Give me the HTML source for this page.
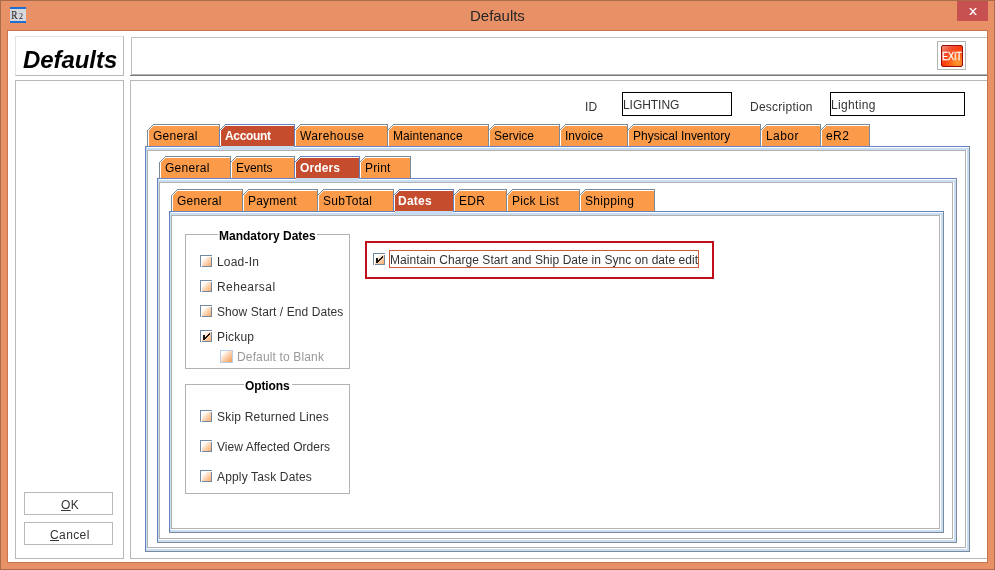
<!DOCTYPE html>
<html lang="en"><head><meta charset="utf-8"><title>Defaults</title>
<style>
html,body{margin:0;padding:0;}
body{width:995px;height:570px;overflow:hidden;background:#e99166;position:relative;font-family:"Liberation Sans",sans-serif;font-size:12px;color:#333333;}
div{position:absolute;box-sizing:border-box;}
svg{position:absolute;left:0;top:0;}
.t{white-space:nowrap;will-change:transform;}
.b{font-weight:bold;color:#000;}
.tab{color:#000;}
.sel{color:#fff;font-weight:bold;}
.dis{color:#999;}
.ti{color:#262626;}
.big{font-weight:bold;font-style:italic;color:#000;}
.ex{color:#fff;}
u{text-decoration:underline;}
.cb{width:12px;height:12px;background:linear-gradient(#fff,#fff) 1px 1px/11px 1px no-repeat,linear-gradient(#fff,#fff) 1px 1px/1px 11px no-repeat,linear-gradient(135deg,#fff 18%,#fdd9bb 50%,#fbab6a 100%) 2px 2px/9px 9px no-repeat,linear-gradient(#fff,#fff) 1px 1px/10px 10px no-repeat,#7088a0;}
.cb.ck{background:linear-gradient(#141414,#141414) 3px 5px/2px 5px no-repeat,linear-gradient(#141414,#141414) 5px 7px/1px 2px no-repeat,linear-gradient(#141414,#141414) 6px 6px/1px 2px no-repeat,linear-gradient(#141414,#141414) 7px 5px/1px 2px no-repeat,linear-gradient(#141414,#141414) 8px 4px/1px 2px no-repeat,linear-gradient(#141414,#141414) 9px 3px/1px 2px no-repeat,linear-gradient(#fff,#fff) 1px 1px/11px 1px no-repeat,linear-gradient(#fff,#fff) 1px 1px/1px 11px no-repeat,linear-gradient(135deg,#fff 18%,#fdd9bb 50%,#fbab6a 100%) 2px 2px/9px 9px no-repeat,linear-gradient(#fff,#fff) 1px 1px/10px 10px no-repeat,#7088a0;}
.cbd{width:13px;height:13px;background:linear-gradient(135deg,#fff 18%,#fbd3b2 50%,#f39a52 100%) 1px 1px/11px 11px no-repeat,#b8cfe5;}
</style></head>
<body>
<div style="left:0px;top:0px;width:995px;height:570px;border:1px solid #aa6b4c;"></div>
<div style="left:7px;top:30px;width:981px;height:533px;background:#fff;border:1px solid #c8744f;"></div>
<div style="left:957px;top:1px;width:31px;height:20px;background:#c75050;"></div>
<svg width="995" height="570" viewBox="0 0 995 570"><path d="M969.1 8h1.8l6 7h-1.8zM975.1 8h1.8l-6 7h-1.8z" fill="#fff"/></svg>
<div style="left:10px;top:7px;width:16px;height:16px;background:#d7d7de;border-top:2px solid #1f6fd0;border-bottom:2px solid #1f6fd0;overflow:hidden;"><div class="t" style="left:0.8px;top:-1px;font-family:'Liberation Serif',serif;font-size:12px;line-height:14px;color:#1a1a1a;transform:scaleX(.82);transform-origin:0 0;">R</div><div class="t" style="left:8.8px;top:2.6px;font-family:'Liberation Serif',serif;font-size:8px;line-height:10px;color:#1a1a1a;">2</div></div>
<div style="left:15px;top:36px;width:109px;height:40px;border:1px solid #b8b8b8;border-top-color:#e2e2e2;border-left-color:#e2e2e2;"></div>
<div style="left:15px;top:80px;width:109px;height:479px;border:1px solid #b8b8b8;"></div>
<div style="left:131px;top:37px;width:856px;height:38px;border-top:1px solid #c0c0c0;border-left:1px solid #c0c0c0;"></div>
<div style="left:131px;top:74px;width:856px;height:1px;background:#b4b4b4;"></div>
<div style="left:130px;top:75px;width:857px;height:1px;background:#787878;"></div>
<div style="left:130px;top:80px;width:857px;height:479px;border-top:1px solid #b8b8b8;border-left:1px solid #b8b8b8;border-bottom:1px solid #b8b8b8;"></div>
<div style="left:937px;top:41px;width:29px;height:29px;border:1px solid #b4b4b4;background:#fff;"></div>
<div style="left:941px;top:45px;width:22px;height:22px;border:1px solid #9c0a0a;border-radius:2px;background:radial-gradient(ellipse at 78% 82%,#ff9c34 0%,rgba(255,130,40,.6) 30%,rgba(255,90,20,0) 60%),linear-gradient(135deg,#f0937f 0%,#f0553a 24%,#ff3c0c 50%,#ff4a12 100%);"></div>
<div style="left:24px;top:492px;width:89px;height:23px;border:1px solid #b8b8b8;background:#fff;"></div>
<div style="left:24px;top:522px;width:89px;height:23px;border:1px solid #b8b8b8;background:#fff;"></div>
<div style="left:622px;top:92px;width:110px;height:24px;border:1px solid #000;background:#fff;"></div>
<div style="left:830px;top:92px;width:135px;height:24px;border:1px solid #000;background:#fff;"></div>
<svg width="995" height="570" viewBox="0 0 995 570" shape-rendering="crispEdges"><rect x="145" y="146" width="825" height="406" fill="#c8ddf2"/><rect x="147" y="150" width="820" height="399" fill="#fff"/><rect x="146" y="147" width="823" height="1" fill="#fff"/><rect x="146" y="147" width="1" height="404" fill="#c8ddf2"/><rect x="145" y="146" width="825" height="1" fill="#6382bf"/><rect x="145" y="146" width="1" height="406" fill="#6382bf"/><rect x="969" y="146" width="1" height="406" fill="#7a8a99"/><rect x="145" y="551" width="825" height="1" fill="#7a8a99"/><rect x="147.5" y="150.5" width="818" height="397" fill="none" stroke="#b2b2b2" stroke-width="1"/><polygon points="147,146 147,130 153,124 220,124 220,146" fill="#fb9b4a"/><polyline points="148.5,146 148.5,130.5 153.5,125.5 219,125.5" fill="none" stroke="#fff" stroke-width="1"/><polyline points="147.5,146 147.5,130.5 153.5,124.5 219.5,124.5" fill="none" stroke="#7a8a99" stroke-width="1"/><rect x="219" y="124" width="1" height="22" fill="#7a8a99"/><polygon points="294,146 294,130 300,124 388,124 388,146" fill="#fb9b4a"/><polyline points="295.5,146 295.5,130.5 300.5,125.5 387,125.5" fill="none" stroke="#fff" stroke-width="1"/><polyline points="294.5,146 294.5,130.5 300.5,124.5 387.5,124.5" fill="none" stroke="#7a8a99" stroke-width="1"/><rect x="387" y="124" width="1" height="7" fill="#7a8a99"/><polygon points="387,146 387,130 393,124 489,124 489,146" fill="#fb9b4a"/><polyline points="388.5,146 388.5,130.5 393.5,125.5 488,125.5" fill="none" stroke="#fff" stroke-width="1"/><polyline points="387.5,146 387.5,130.5 393.5,124.5 488.5,124.5" fill="none" stroke="#7a8a99" stroke-width="1"/><rect x="488" y="124" width="1" height="7" fill="#7a8a99"/><polygon points="488,146 488,130 494,124 560,124 560,146" fill="#fb9b4a"/><polyline points="489.5,146 489.5,130.5 494.5,125.5 559,125.5" fill="none" stroke="#fff" stroke-width="1"/><polyline points="488.5,146 488.5,130.5 494.5,124.5 559.5,124.5" fill="none" stroke="#7a8a99" stroke-width="1"/><rect x="559" y="124" width="1" height="7" fill="#7a8a99"/><polygon points="559,146 559,130 565,124 628,124 628,146" fill="#fb9b4a"/><polyline points="560.5,146 560.5,130.5 565.5,125.5 627,125.5" fill="none" stroke="#fff" stroke-width="1"/><polyline points="559.5,146 559.5,130.5 565.5,124.5 627.5,124.5" fill="none" stroke="#7a8a99" stroke-width="1"/><rect x="627" y="124" width="1" height="7" fill="#7a8a99"/><polygon points="627,146 627,130 633,124 761,124 761,146" fill="#fb9b4a"/><polyline points="628.5,146 628.5,130.5 633.5,125.5 760,125.5" fill="none" stroke="#fff" stroke-width="1"/><polyline points="627.5,146 627.5,130.5 633.5,124.5 760.5,124.5" fill="none" stroke="#7a8a99" stroke-width="1"/><rect x="760" y="124" width="1" height="7" fill="#7a8a99"/><polygon points="760,146 760,130 766,124 821,124 821,146" fill="#fb9b4a"/><polyline points="761.5,146 761.5,130.5 766.5,125.5 820,125.5" fill="none" stroke="#fff" stroke-width="1"/><polyline points="760.5,146 760.5,130.5 766.5,124.5 820.5,124.5" fill="none" stroke="#7a8a99" stroke-width="1"/><rect x="820" y="124" width="1" height="7" fill="#7a8a99"/><polygon points="820,146 820,130 826,124 870,124 870,146" fill="#fb9b4a"/><polyline points="821.5,146 821.5,130.5 826.5,125.5 869,125.5" fill="none" stroke="#fff" stroke-width="1"/><polyline points="820.5,146 820.5,130.5 826.5,124.5 869.5,124.5" fill="none" stroke="#7a8a99" stroke-width="1"/><rect x="869" y="124" width="1" height="22" fill="#7a8a99"/><polygon points="219,147 219,130 225,124 295,124 295,147" fill="#c54c2c"/><rect x="221" y="146" width="73" height="2" fill="#c8ddf2"/><polyline points="220.5,146 220.5,130.5 225.5,125.5 294,125.5" fill="none" stroke="#fff" stroke-width="1"/><polyline points="219.5,147 219.5,130.5 225.5,124.5 294.5,124.5 294.5,147" fill="none" stroke="#6382bf" stroke-width="1"/><rect x="157" y="178" width="800" height="365" fill="#c8ddf2"/><rect x="159" y="182" width="795" height="358" fill="#fff"/><rect x="158" y="179" width="798" height="1" fill="#fff"/><rect x="158" y="179" width="1" height="363" fill="#c8ddf2"/><rect x="157" y="178" width="800" height="1" fill="#6382bf"/><rect x="157" y="178" width="1" height="365" fill="#6382bf"/><rect x="956" y="178" width="1" height="365" fill="#7a8a99"/><rect x="157" y="542" width="800" height="1" fill="#7a8a99"/><rect x="159.5" y="182.5" width="793" height="356" fill="none" stroke="#b2b2b2" stroke-width="1"/><polygon points="159,178 159,162 165,156 231,156 231,178" fill="#fb9b4a"/><polyline points="160.5,178 160.5,162.5 165.5,157.5 230,157.5" fill="none" stroke="#fff" stroke-width="1"/><polyline points="159.5,178 159.5,162.5 165.5,156.5 230.5,156.5" fill="none" stroke="#7a8a99" stroke-width="1"/><rect x="230" y="156" width="1" height="7" fill="#7a8a99"/><polygon points="230,178 230,162 236,156 295,156 295,178" fill="#fb9b4a"/><polyline points="231.5,178 231.5,162.5 236.5,157.5 294,157.5" fill="none" stroke="#fff" stroke-width="1"/><polyline points="230.5,178 230.5,162.5 236.5,156.5 294.5,156.5" fill="none" stroke="#7a8a99" stroke-width="1"/><rect x="294" y="156" width="1" height="22" fill="#7a8a99"/><polygon points="359,178 359,162 365,156 411,156 411,178" fill="#fb9b4a"/><polyline points="360.5,178 360.5,162.5 365.5,157.5 410,157.5" fill="none" stroke="#fff" stroke-width="1"/><polyline points="359.5,178 359.5,162.5 365.5,156.5 410.5,156.5" fill="none" stroke="#7a8a99" stroke-width="1"/><rect x="410" y="156" width="1" height="22" fill="#7a8a99"/><polygon points="294,179 294,162 300,156 360,156 360,179" fill="#c54c2c"/><rect x="296" y="178" width="63" height="2" fill="#c8ddf2"/><polyline points="295.5,178 295.5,162.5 300.5,157.5 359,157.5" fill="none" stroke="#fff" stroke-width="1"/><polyline points="294.5,179 294.5,162.5 300.5,156.5 359.5,156.5 359.5,179" fill="none" stroke="#6382bf" stroke-width="1"/><rect x="169" y="211" width="775" height="322" fill="#c8ddf2"/><rect x="171" y="215" width="770" height="315" fill="#fff"/><rect x="170" y="212" width="773" height="1" fill="#fff"/><rect x="170" y="212" width="1" height="320" fill="#c8ddf2"/><rect x="169" y="211" width="775" height="1" fill="#6382bf"/><rect x="169" y="211" width="1" height="322" fill="#6382bf"/><rect x="943" y="211" width="1" height="322" fill="#7a8a99"/><rect x="169" y="532" width="775" height="1" fill="#7a8a99"/><rect x="171.5" y="215.5" width="768" height="313" fill="none" stroke="#b2b2b2" stroke-width="1"/><polygon points="171,211 171,195 177,189 243,189 243,211" fill="#fb9b4a"/><polyline points="172.5,211 172.5,195.5 177.5,190.5 242,190.5" fill="none" stroke="#fff" stroke-width="1"/><polyline points="171.5,211 171.5,195.5 177.5,189.5 242.5,189.5" fill="none" stroke="#7a8a99" stroke-width="1"/><rect x="242" y="189" width="1" height="7" fill="#7a8a99"/><polygon points="242,211 242,195 248,189 318,189 318,211" fill="#fb9b4a"/><polyline points="243.5,211 243.5,195.5 248.5,190.5 317,190.5" fill="none" stroke="#fff" stroke-width="1"/><polyline points="242.5,211 242.5,195.5 248.5,189.5 317.5,189.5" fill="none" stroke="#7a8a99" stroke-width="1"/><rect x="317" y="189" width="1" height="7" fill="#7a8a99"/><polygon points="317,211 317,195 323,189 394,189 394,211" fill="#fb9b4a"/><polyline points="318.5,211 318.5,195.5 323.5,190.5 393,190.5" fill="none" stroke="#fff" stroke-width="1"/><polyline points="317.5,211 317.5,195.5 323.5,189.5 393.5,189.5" fill="none" stroke="#7a8a99" stroke-width="1"/><rect x="393" y="189" width="1" height="22" fill="#7a8a99"/><polygon points="453,211 453,195 459,189 507,189 507,211" fill="#fb9b4a"/><polyline points="454.5,211 454.5,195.5 459.5,190.5 506,190.5" fill="none" stroke="#fff" stroke-width="1"/><polyline points="453.5,211 453.5,195.5 459.5,189.5 506.5,189.5" fill="none" stroke="#7a8a99" stroke-width="1"/><rect x="506" y="189" width="1" height="7" fill="#7a8a99"/><polygon points="506,211 506,195 512,189 580,189 580,211" fill="#fb9b4a"/><polyline points="507.5,211 507.5,195.5 512.5,190.5 579,190.5" fill="none" stroke="#fff" stroke-width="1"/><polyline points="506.5,211 506.5,195.5 512.5,189.5 579.5,189.5" fill="none" stroke="#7a8a99" stroke-width="1"/><rect x="579" y="189" width="1" height="7" fill="#7a8a99"/><polygon points="579,211 579,195 585,189 655,189 655,211" fill="#fb9b4a"/><polyline points="580.5,211 580.5,195.5 585.5,190.5 654,190.5" fill="none" stroke="#fff" stroke-width="1"/><polyline points="579.5,211 579.5,195.5 585.5,189.5 654.5,189.5" fill="none" stroke="#7a8a99" stroke-width="1"/><rect x="654" y="189" width="1" height="22" fill="#7a8a99"/><polygon points="393,212 393,195 399,189 454,189 454,212" fill="#c54c2c"/><rect x="395" y="211" width="58" height="2" fill="#c8ddf2"/><polyline points="394.5,211 394.5,195.5 399.5,190.5 453,190.5" fill="none" stroke="#fff" stroke-width="1"/><polyline points="393.5,212 393.5,195.5 399.5,189.5 453.5,189.5 453.5,212" fill="none" stroke="#6382bf" stroke-width="1"/><rect x="185" y="234" width="33" height="1" fill="#b2b2b2"/><rect x="317" y="234" width="33" height="1" fill="#b2b2b2"/><rect x="185" y="234" width="1" height="135" fill="#b2b2b2"/><rect x="349" y="234" width="1" height="135" fill="#b2b2b2"/><rect x="185" y="368" width="165" height="1" fill="#b2b2b2"/><rect x="185" y="384" width="59" height="1" fill="#b2b2b2"/><rect x="292" y="384" width="58" height="1" fill="#b2b2b2"/><rect x="185" y="384" width="1" height="110" fill="#b2b2b2"/><rect x="349" y="384" width="1" height="110" fill="#b2b2b2"/><rect x="185" y="493" width="165" height="1" fill="#b2b2b2"/><rect x="366" y="242" width="347" height="36" fill="none" stroke="#c00f1a" stroke-width="2"/><rect x="389.5" y="250.5" width="309" height="17" fill="none" stroke="#cf5a3c" stroke-width="1"/></svg>
<div class="cb" style="left:200px;top:255px;"></div>
<div class="cb" style="left:200px;top:280px;"></div>
<div class="cb" style="left:200px;top:305px;"></div>
<div class="cb ck" style="left:200px;top:330px;"></div>
<div class="cbd" style="left:220px;top:350px;"></div>
<div class="cb" style="left:200px;top:410px;"></div>
<div class="cb" style="left:200px;top:440px;"></div>
<div class="cb" style="left:200px;top:470px;"></div>
<div class="cb ck" style="left:373px;top:253px;"></div>
<div id="title" class="t ti" style="left:469.85px;top:7.42px;font-size:15px;line-height:18px;letter-spacing:-0.023px;">Defaults</div>
<div id="big" class="t big" style="left:23.00px;top:45.28px;font-size:24px;line-height:29px;letter-spacing:-0.065px;">Defaults</div>
<div id="exit" class="t ex" style="left:942.40px;top:51.40px;font-size:10px;line-height:12px;letter-spacing:0.000px;transform:scaleX(.9);transform-origin:0 0;-webkit-text-stroke:0.3px #fff;">EXIT</div>
<div id="ok" class="t " style="left:61.00px;top:498.14px;font-size:12px;line-height:14px;letter-spacing:0.300px;"><u>O</u>K</div>
<div id="cancel" class="t " style="left:50.00px;top:528.14px;font-size:12px;line-height:14px;letter-spacing:0.398px;"><u>C</u>ancel</div>
<div id="id" class="t " style="left:585.35px;top:100.14px;font-size:12px;line-height:14px;letter-spacing:0.203px;">ID</div>
<div id="idv" class="t " style="left:623.00px;top:98.14px;font-size:12px;line-height:14px;letter-spacing:-0.049px;">LIGHTING</div>
<div id="desc" class="t " style="left:750.00px;top:100.14px;font-size:12px;line-height:14px;letter-spacing:0.246px;">Description</div>
<div id="descv" class="t " style="left:831.00px;top:98.14px;font-size:12px;line-height:14px;letter-spacing:0.328px;">Lighting</div>
<div id="t1a" class="t tab" style="left:152.95px;top:129.14px;font-size:12px;line-height:14px;letter-spacing:0.279px;">General</div>
<div id="t1b" class="t sel" style="left:224.65px;top:129.14px;font-size:12px;line-height:14px;letter-spacing:-0.327px;">Account</div>
<div id="t1c" class="t tab" style="left:300.00px;top:129.14px;font-size:12px;line-height:14px;letter-spacing:0.386px;">Warehouse</div>
<div id="t1d" class="t tab" style="left:393.00px;top:129.14px;font-size:12px;line-height:14px;letter-spacing:0.090px;">Maintenance</div>
<div id="t1e" class="t tab" style="left:494.00px;top:129.14px;font-size:12px;line-height:14px;letter-spacing:0.000px;">Service</div>
<div id="t1f" class="t tab" style="left:565.30px;top:129.14px;font-size:12px;line-height:14px;letter-spacing:0.012px;">Invoice</div>
<div id="t1g" class="t tab" style="left:633.00px;top:129.14px;font-size:12px;line-height:14px;letter-spacing:-0.013px;">Physical Inventory</div>
<div id="t1h" class="t tab" style="left:766.00px;top:129.14px;font-size:12px;line-height:14px;letter-spacing:0.421px;">Labor</div>
<div id="t1i" class="t tab" style="left:826.00px;top:129.14px;font-size:12px;line-height:14px;letter-spacing:0.450px;">eR2</div>
<div id="t2a" class="t tab" style="left:164.95px;top:161.14px;font-size:12px;line-height:14px;letter-spacing:0.279px;">General</div>
<div id="t2b" class="t tab" style="left:236.00px;top:161.14px;font-size:12px;line-height:14px;letter-spacing:-0.030px;">Events</div>
<div id="t2c" class="t sel" style="left:299.60px;top:161.14px;font-size:12px;line-height:14px;letter-spacing:0.139px;">Orders</div>
<div id="t2d" class="t tab" style="left:365.00px;top:161.14px;font-size:12px;line-height:14px;letter-spacing:0.168px;">Print</div>
<div id="t3a" class="t tab" style="left:176.95px;top:194.14px;font-size:12px;line-height:14px;letter-spacing:0.279px;">General</div>
<div id="t3b" class="t tab" style="left:248.00px;top:194.14px;font-size:12px;line-height:14px;letter-spacing:0.207px;">Payment</div>
<div id="t3c" class="t tab" style="left:323.00px;top:194.14px;font-size:12px;line-height:14px;letter-spacing:0.333px;">SubTotal</div>
<div id="t3d" class="t sel" style="left:398.00px;top:194.14px;font-size:12px;line-height:14px;letter-spacing:0.225px;">Dates</div>
<div id="t3e" class="t tab" style="left:459.00px;top:194.14px;font-size:12px;line-height:14px;letter-spacing:0.291px;">EDR</div>
<div id="t3f" class="t tab" style="left:512.00px;top:194.14px;font-size:12px;line-height:14px;letter-spacing:0.260px;">Pick List</div>
<div id="t3g" class="t tab" style="left:585.00px;top:194.14px;font-size:12px;line-height:14px;letter-spacing:0.317px;">Shipping</div>
<div id="g1" class="t b" style="left:219.00px;top:229.14px;font-size:12px;line-height:14px;letter-spacing:0.000px;">Mandatory Dates</div>
<div id="g2" class="t b" style="left:245.00px;top:379.14px;font-size:12px;line-height:14px;letter-spacing:-0.124px;">Options</div>
<div id="c1" class="t " style="left:217.00px;top:255.14px;font-size:12px;line-height:14px;letter-spacing:0.195px;">Load-In</div>
<div id="c2" class="t " style="left:217.00px;top:280.14px;font-size:12px;line-height:14px;letter-spacing:0.418px;">Rehearsal</div>
<div id="c3" class="t " style="left:217.00px;top:305.14px;font-size:12px;line-height:14px;letter-spacing:0.077px;">Show Start / End Dates</div>
<div id="c4" class="t " style="left:217.00px;top:330.14px;font-size:12px;line-height:14px;letter-spacing:0.200px;">Pickup</div>
<div id="c5" class="t dis" style="left:237.00px;top:350.14px;font-size:12px;line-height:14px;letter-spacing:0.148px;">Default to Blank</div>
<div id="c6" class="t " style="left:217.00px;top:410.14px;font-size:12px;line-height:14px;letter-spacing:0.204px;">Skip Returned Lines</div>
<div id="c7" class="t " style="left:216.85px;top:440.14px;font-size:12px;line-height:14px;letter-spacing:0.041px;">View Affected Orders</div>
<div id="c8" class="t " style="left:216.90px;top:470.14px;font-size:12px;line-height:14px;letter-spacing:0.152px;">Apply Task Dates</div>
<div id="m" class="t " style="left:389.67px;top:253.14px;font-size:12px;line-height:14px;letter-spacing:0.060px;">Maintain Charge Start and Ship Date in Sync on date edit</div>
</body></html>
